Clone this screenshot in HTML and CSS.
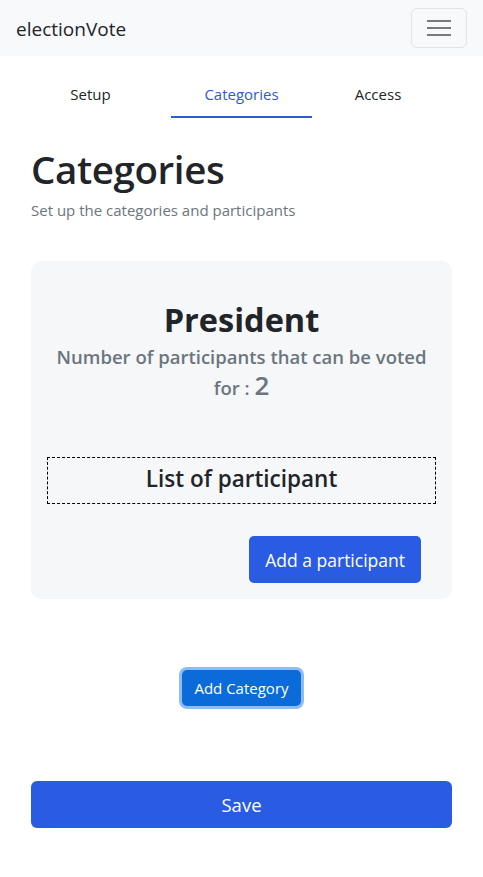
FILE: index.html
```html
<!DOCTYPE html>
<html lang="en">
<head>
<meta charset="utf-8">
<title>electionVote</title>
<link rel="stylesheet" href="styles.css">
</head>
<body>
<header class="navbar">
  <span class="brand">electionVote</span>
  <button class="toggler" aria-label="Toggle navigation">
    <svg width="26" height="20" viewBox="0 0 26 20"><path d="M1 3h24M1 10h24M1 17h24" stroke="#7a7a7a" stroke-width="2"/></svg>
  </button>
</header>
<nav class="tabs">
  <a class="tab">Setup</a>
  <a class="tab active">Categories</a>
  <a class="tab">Access</a>
</nav>
<main class="content">
  <h1 class="title">Categories</h1>
  <p class="subtitle">Set up the categories and participants</p>
  <section class="card">
    <h2 class="cat-name">President</h2>
    <p class="cat-count">Number of participants that can be voted<br>for : <span class="num">2</span></p>
    <div class="plist">List of participant</div>
    <div class="card-actions"><button class="btn btn-lg btn-add">Add a participant</button></div>
  </section>
  <div class="center"><button class="btn btn-focus">Add Category</button></div>
  <button class="btn btn-lg btn-block">Save</button>
</main>
</body>
</html>
```
FILE: styles.css
```css
* { box-sizing: border-box; }
body {
  margin: 0;
  font-family: "Open Sans", "Noto Sans", sans-serif;
  color: #212529;
  background: #fff;
}
.navbar {
  height: 56px;
  background: #f8f9fa;
  display: flex;
  align-items: center;
  justify-content: space-between;
  padding: 0 16px;
}
.brand { font-size: 19px; color: #212529; margin-top: 2px; }
.toggler {
  width: 56px;
  height: 40px;
  margin-top: -1px;
  border: 1px solid #e2e3e4;
  border-radius: 6px;
  background: transparent;
  display: flex;
  align-items: center;
  justify-content: center;
  padding: 0;
}
.tabs {
  display: grid;
  grid-template-columns: 161px 141px 132px;
  padding-left: 10px;
  margin-top: 21px;
}
.tab {
  text-align: center;
  font-size: 15px;
  color: #212529;
  height: 41px;
  line-height: 34px;
}
.tab.active { color: #2f5bd0; border-bottom: 2px solid #2f5bd0; }
.content { padding: 0 31px; }
.title {
  margin: 27px 0 0;
  font-size: 38.5px;
  font-weight: 600;
  line-height: 48px;
  letter-spacing: -0.4px;
}
.subtitle {
  margin: 6px 0 0;
  font-size: 15px;
  color: #6c757d;
  line-height: 22px;
}
.card {
  margin-top: 40px;
  background: #f6f7f9;
  border-radius: 10px;
  padding: 38px 16px 16px;
}
.cat-name {
  margin: 0;
  text-align: center;
  font-size: 32.5px;
  font-weight: 700;
  line-height: 42px;
}
.cat-count {
  margin: 0;
  text-align: center;
  font-size: 18.5px;
  font-weight: 600;
  color: #6c757d;
  line-height: 31px;
}
.num { font-size: 26px; font-weight: 600; line-height: 1; }
.plist {
  margin-top: 54px;
  border: 1px dashed #000;
  height: 47px;
  display: flex;
  align-items: center;
  justify-content: center;
  padding-bottom: 4px;
  font-size: 22.5px;
  font-weight: 600;
}
.card-actions {
  display: flex;
  justify-content: flex-end;
  padding-right: 15px;
  margin-top: 32px;
}
.btn {
  font-family: inherit;
  border: 0;
  color: #fff;
  background: #2a5ce3;
  border-radius: 5px;
  cursor: pointer;
}
.btn-lg {
  font-size: 18.5px;
  height: 47px;
  padding: 0 16px;
}
.btn-add { font-size: 17.5px; }
.center {
  display: flex;
  justify-content: center;
  margin-top: 71px;
}
.btn-focus {
  background: #0b6bd8;
  font-size: 15px;
  height: 36px;
  padding: 0 12px 1px;
  border-radius: 5px;
  box-shadow: 0 0 0 3px #8ebcf5;
}
.btn-block {
  display: block;
  width: 100%;
  margin-top: 75px;
  border-radius: 6px;
}
```
